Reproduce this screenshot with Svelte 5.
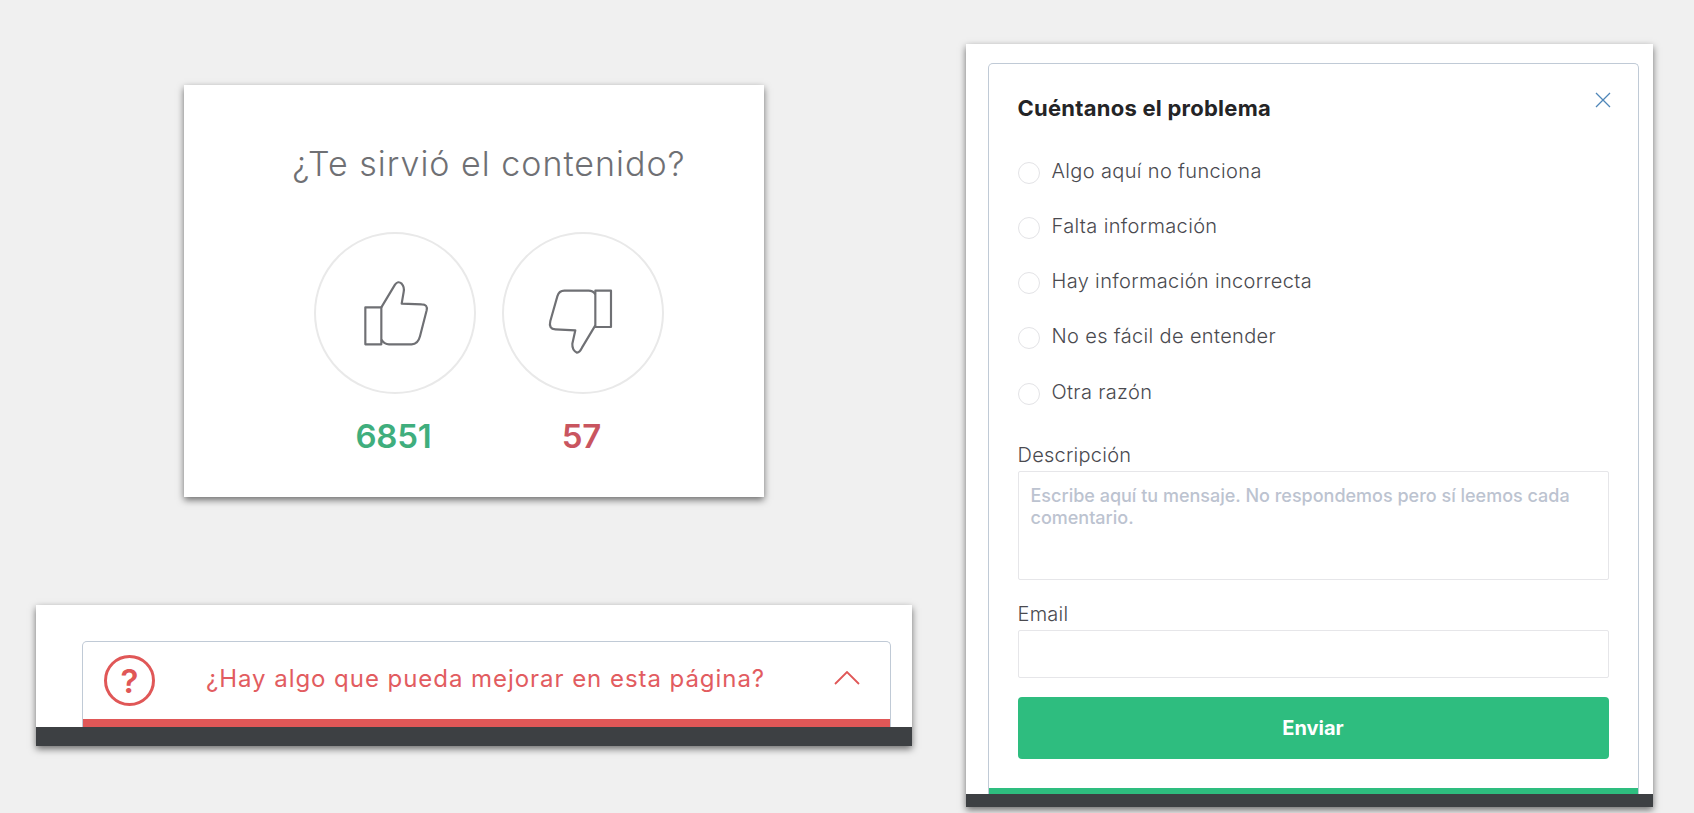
<script>
  const reasons = ['Algo aquí no funciona', 'Falta información', 'Hay información incorrecta', 'No es fácil de entender', 'Otra razón'];
</script>

<div class="page">
  <div class="left">
    <section class="vote">
      <h2>¿Te sirvió el contenido?</h2>
      <div class="choices">
        <div class="choice">
          <div class="circle">
            <svg viewBox="115 107 280 280" width="93.33" height="93.33" aria-hidden="true">
              <rect x="167" y="231" width="48" height="111" />
              <path d="M215 231 L256 163 Q265 150 276 160 Q285 170 282 185 L276 220 L336 222 Q355 222 351 240 L331 318 Q325 342 306 342 L238 342 Q224 342 215 328" />
            </svg>
          </div>
          <span class="count up">6851</span>
        </div>
        <div class="choice">
          <div class="circle">
            <svg viewBox="677 107 280 280" width="93.33" height="93.33" aria-hidden="true">
              <rect x="855" y="181" width="47" height="109" />
              <path d="M855 192 Q848 181 835 181 L762 181 Q746 181 741 198 L720 272 Q714 296 735 297 L795 300 L786 340 Q785 360 800 367 Q808 366 815 352 L855 285" />
            </svg>
          </div>
          <span class="count down">57</span>
        </div>
      </div>
    </section>

    <section class="banner">
      <div class="ask">
        <div class="ask-row">
          <span class="q">?</span>
          <span class="ask-text">¿Hay algo que pueda mejorar en esta página?</span>
          <svg class="chev" viewBox="0 0 26 14" width="26" height="14" aria-hidden="true"><path d="M1 13 L13 1 L25 13" /></svg>
        </div>
        <div class="bar red"></div>
      </div>
      <div class="foot"></div>
    </section>
  </div>

  <section class="panel">
    <div class="form">
      <svg class="close" viewBox="0 0 16 16" width="16" height="16" aria-hidden="true"><path d="M1 1 L15 15 M15 1 L1 15" /></svg>
      <div class="form-body">
        <h3>Cuéntanos el problema</h3>
        <div class="reasons">
          {#each reasons as r}
            <div class="reason"><span class="radio"></span><span class="reason-text">{r}</span></div>
          {/each}
        </div>
        <div class="label desc">Descripción</div>
        <div class="area">Escribe aquí tu mensaje. No respondemos pero sí leemos cada comentario.</div>
        <div class="label email">Email</div>
        <div class="input"></div>
        <div class="send">Enviar</div>
      </div>
      <div class="bar green"></div>
    </div>
    <div class="foot small"></div>
  </section>
</div>

<style>
  :global(body) { margin: 0; background: #f0f0f0; }
  .page {
    display: flex;
    align-items: flex-start;
    width: 1694px;
    height: 813px;
    overflow: hidden;
    background: #f0f0f0;
    font-family: Inter, "Liberation Sans", sans-serif;
    box-sizing: border-box;
    padding-left: 36px;
  }
  .left { width: 876px; padding-top: 85px; }
  .vote {
    box-sizing: border-box;
    width: 580px;
    height: 412px;
    margin-left: 148px;
    background: #fff;
    box-shadow: 0 3px 7px rgba(0,0,0,.55);
    padding: 57px 0 0 30px;
    display: flex;
    flex-direction: column;
    align-items: center;
  }
  h2 {
    margin: 0;
    font-size: 34px;
    line-height: 44px;
    font-weight: 300;
    color: #6f7074;
    letter-spacing: 1px;
    white-space: nowrap;
  }
  .choices { display: flex; gap: 26px; margin-top: 46px; }
  .choice { display: flex; flex-direction: column; align-items: center; width: 162px; }
  .circle {
    box-sizing: border-box;
    width: 162px;
    height: 162px;
    border: 2px solid #e9e9e9;
    border-radius: 50%;
    display: flex;
    align-items: center;
    justify-content: center;
  }
  .circle svg { display: block; fill: none; stroke: #6f7074; stroke-width: 6.5; stroke-linejoin: round; }
  .count { font-size: 33px; line-height: 40px; font-weight: 600; margin: 22px 3px 0 0; letter-spacing: -.2px; }
  .up { color: #3fae7d; }
  .down { color: #c9555f; }

  .banner {
    width: 876px;
    height: 141px;
    margin-top: 108px;
    background: #fff;
    box-shadow: 0 3px 7px rgba(0,0,0,.55);
    padding-top: 36px;
    box-sizing: border-box;
    display: flex;
    flex-direction: column;
  }
  .ask {
    box-sizing: border-box;
    width: 809px;
    height: 86px;
    margin-left: 45.5px;
    border: 1.5px solid #c0cad6;
    border-bottom: 0;
    border-radius: 5px 5px 0 0;
    display: flex;
    flex-direction: column;
  }
  .ask-row { flex: 1; display: flex; align-items: center; padding-left: 21.5px; }
  .q {
    box-sizing: border-box;
    width: 51px;
    height: 51px;
    border: 3.5px solid #e05757;
    border-radius: 50%;
    display: flex;
    align-items: center;
    justify-content: center;
    color: #e05757;
    font-size: 33px;
    font-weight: 600;
    flex: none;
  }
  .ask-text { margin: 0 0 4px 51px; font-size: 24px; line-height: 30px; font-weight: 400; color: #e25c60; letter-spacing: .95px; white-space: nowrap; width: 628px; }
  .chev { fill: none; stroke: #e05757; stroke-width: 1.8; flex: none; margin-bottom: 6px; }
  .bar { flex: none; }
  .bar.red { height: 8px; background: #e05757; }
  .bar.green { height: 6px; background: #2ebd7f; }
  .foot { flex: none; height: 19px; background: #3d4043; }
  .foot.small { height: 13px; }

  .panel {
    box-sizing: border-box;
    width: 687px;
    height: 763px;
    margin: 44px 0 0 54px;
    padding-top: 19px;
    background: #fff;
    box-shadow: 0 3px 7px rgba(0,0,0,.55);
    display: flex;
    flex-direction: column;
  }
  .form {
    box-sizing: border-box;
    position: relative;
    width: 650.5px;
    height: 731px;
    margin-left: 22px;
    border: 1.5px solid #c0cad6;
    border-bottom: 0;
    border-radius: 5px 5px 0 0;
    display: flex;
    flex-direction: column;
  }
  .close { position: absolute; top: 28px; right: 27px; fill: none; stroke: #4f86b8; stroke-width: 1.3; }
  .form-body { flex: 1; box-sizing: border-box; padding: 29px 29px 0 28.5px; display: flex; flex-direction: column; }
  h3 { margin: 0; font-size: 22px; line-height: 30px; font-weight: 700; color: #242426; letter-spacing: .25px; white-space: nowrap; }
  .reasons { display: flex; flex-direction: column; gap: 27.3px; margin-top: 35.5px; }
  .reason { display: flex; align-items: center; height: 28px; font-size: 20px; font-weight: 300; color: #4a4a4f; letter-spacing: .35px; white-space: nowrap; }
  .reason-text { margin-bottom: 4px; }
  .radio { box-sizing: border-box; width: 22px; height: 22px; border: 1.5px solid #e3e3e6; border-radius: 50%; margin-right: 12px; flex: none; }
  .label { font-size: 20px; line-height: 26px; font-weight: 300; color: #4a4a4f; letter-spacing: .25px; }
  .desc { margin-top: 34px; }
  .email { margin-top: 21px; }
  .area, .input { box-sizing: border-box; border: 1.5px solid #e6e6e9; border-radius: 2px; }
  .area { height: 109px; margin-top: 3px; padding: 13px 12px; font-size: 18px; line-height: 22px; color: #bcc3d0; font-weight: 500; }
  .input { height: 48px; margin-top: 3px; }
  .send {
    height: 62px;
    margin-top: 19px;
    background: #2ebd7f;
    border-radius: 4px;
    display: flex;
    align-items: center;
    justify-content: center;
    color: #fff;
    font-size: 20px;
    font-weight: 700;
  }
</style>
